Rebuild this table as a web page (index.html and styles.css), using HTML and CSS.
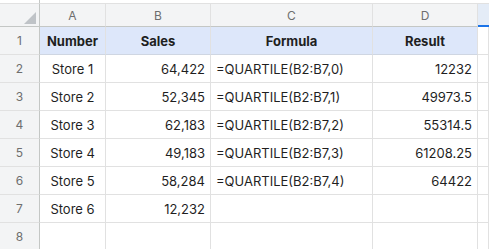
FILE: index.html
```html
<!DOCTYPE html>
<html>
<head>
<meta charset="utf-8">
<link rel="stylesheet" href="styles.css">
</head>
<body>
<div class="sheet">
  <div class="strip corner-strip"></div><div class="strip"></div><div class="strip"></div><div class="strip"></div><div class="strip"></div><div class="strip"></div>

  <div class="colhead corner"><svg class="tri" width="12" height="12" viewBox="0 0 12 12"><polygon points="0,12 12,12 12,0" fill="#bfc3c7"/></svg></div>
  <div class="colhead">A</div>
  <div class="colhead">B</div>
  <div class="colhead">C</div>
  <div class="colhead">D</div>
  <div class="colhead sel"></div>

  <div class="rowhead">1</div>
  <div class="cell hdr">Number</div>
  <div class="cell hdr">Sales</div>
  <div class="cell hdr">Formula</div>
  <div class="cell hdr">Result</div>
  <div class="cell"></div>

  <div class="rowhead">2</div>
  <div class="cell ctr">Store 1</div>
  <div class="cell num">64,422</div>
  <div class="cell txt">=QUARTILE(B2:B7,0)</div>
  <div class="cell num">12232</div>
  <div class="cell"></div>

  <div class="rowhead">3</div>
  <div class="cell ctr">Store 2</div>
  <div class="cell num">52,345</div>
  <div class="cell txt">=QUARTILE(B2:B7,1)</div>
  <div class="cell num">49973.5</div>
  <div class="cell"></div>

  <div class="rowhead">4</div>
  <div class="cell ctr">Store 3</div>
  <div class="cell num">62,183</div>
  <div class="cell txt">=QUARTILE(B2:B7,2)</div>
  <div class="cell num">55314.5</div>
  <div class="cell"></div>

  <div class="rowhead">5</div>
  <div class="cell ctr">Store 4</div>
  <div class="cell num">49,183</div>
  <div class="cell txt">=QUARTILE(B2:B7,3)</div>
  <div class="cell num">61208.25</div>
  <div class="cell"></div>

  <div class="rowhead">6</div>
  <div class="cell ctr">Store 5</div>
  <div class="cell num">58,284</div>
  <div class="cell txt">=QUARTILE(B2:B7,4)</div>
  <div class="cell num">64422</div>
  <div class="cell"></div>

  <div class="rowhead">7</div>
  <div class="cell ctr">Store 6</div>
  <div class="cell num">12,232</div>
  <div class="cell txt"></div>
  <div class="cell num"></div>
  <div class="cell"></div>

  <div class="rowhead">8</div>
  <div class="cell"></div>
  <div class="cell"></div>
  <div class="cell"></div>
  <div class="cell"></div>
  <div class="cell"></div>
</div>
</body>
</html>
```
FILE: styles.css
```css
html, body {
  margin: 0;
  padding: 0;
  background: #ffffff;
  overflow: hidden;
}
.sheet {
  display: grid;
  grid-template-columns: 40px 66px 105px 162px 105px 1fr;
  grid-template-rows: 3px 24px repeat(8, 28px);
  width: 489px;
  font-family: Inter, "Noto Sans", sans-serif;
  font-size: 13px;
  color: #1f1f1f;
}
.sheet > div {
  box-sizing: border-box;
}
.strip {
  background: #fff;
}
.corner-strip {
  border-right: 1px solid #c4c7c5;
}
.colhead {
  background: #f3f4f5;
  border-top: 1px solid #e1e1e1;
  border-bottom: 1px solid #c4c7c5;
  border-right: 1px solid #e1e1e1;
  color: #6e6e6e;
  font-size: 12px;
  display: flex;
  align-items: center;
  justify-content: center;
}
.colhead.corner {
  border-right: 1px solid #c4c7c5;
  position: relative;
}
.tri {
  position: absolute;
  left: 24px;
  top: 8px;
}
.colhead.sel {
  background: #e4ecf7;
  border-right: none;
  border-bottom: 2px solid #1a73e8;
  border-top: 1px solid #e1e1e1;
}
.rowhead {
  background: #f3f4f5;
  border-right: 1px solid #c4c7c5;
  border-bottom: 1px solid #e1e1e1;
  color: #6e6e6e;
  font-size: 12px;
  display: flex;
  align-items: center;
  justify-content: center;
}
.cell {
  border-right: 1px solid #e1e1e1;
  border-bottom: 1px solid #e1e1e1;
  display: flex;
  align-items: center;
  padding: 0 5px;
  white-space: nowrap;
  overflow: hidden;
}
.cell.hdr {
  background: #dde7fa;
  font-weight: 700;
  justify-content: center;
  border-bottom-color: #cfd6e2;
}
.cell.ctr {
  justify-content: center;
}
.cell.num {
  justify-content: flex-end;
}
.cell.txt {
  justify-content: flex-start;
}
```
